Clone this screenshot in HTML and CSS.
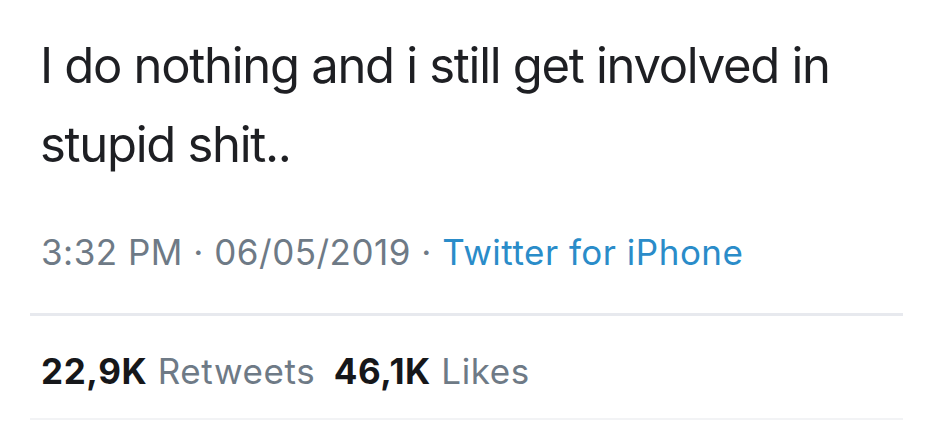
FILE: index.html
```html
<!DOCTYPE html>
<html>
<head>
<meta charset="utf-8">
<link rel="stylesheet" href="styles.css">
</head>
<body>
<div class="tweet">
  <p class="text">I do nothing and i still get involved in<br>stupid shit..</p>
  <div class="meta">3:32 PM · 06/05/2019 · <span class="src">Twitter for iPhone</span></div>
  <div class="stats">
    <span class="num">22,9K</span> <span class="lbl">Retweets</span>
    <span class="num second">46,1K</span> <span class="lbl">Likes</span>
  </div>
</div>
</body>
</html>
```
FILE: styles.css
```css
html, body {
  margin: 0;
  padding: 0;
  background: #ffffff;
}
body {
  width: 933px;
  height: 424px;
  overflow: hidden;
  font-family: Inter, "Helvetica Neue", Arial, sans-serif;
}
.tweet {
  padding: 26px 30px 0 30px;
}
.text {
  margin: 0;
  padding-left: 10px;
  font-size: 49px;
  line-height: 79px;
  font-weight: 380;
  color: #1e1f23;
  letter-spacing: -1.3px;
}
.meta {
  margin-top: 48px;
  padding-left: 11px;
  font-size: 35px;
  line-height: 40px;
  color: #6e7a86;
  letter-spacing: 0.5px;
  padding-bottom: 41px;
  border-bottom: 3px solid #e7e9ee;
}
.src {
  color: #2a8cc9;
}
.stats {
  padding: 35px 0 0 11px;
  font-size: 35px;
  line-height: 40px;
  color: #6e7a86;
  letter-spacing: 0.6px;
  height: 67px;
  border-bottom: 2px solid #f2f3f5;
  box-sizing: content-box;
}
.num {
  color: #16171a;
  font-weight: 700;
}
.second {
  margin-left: 8px;
}
```
